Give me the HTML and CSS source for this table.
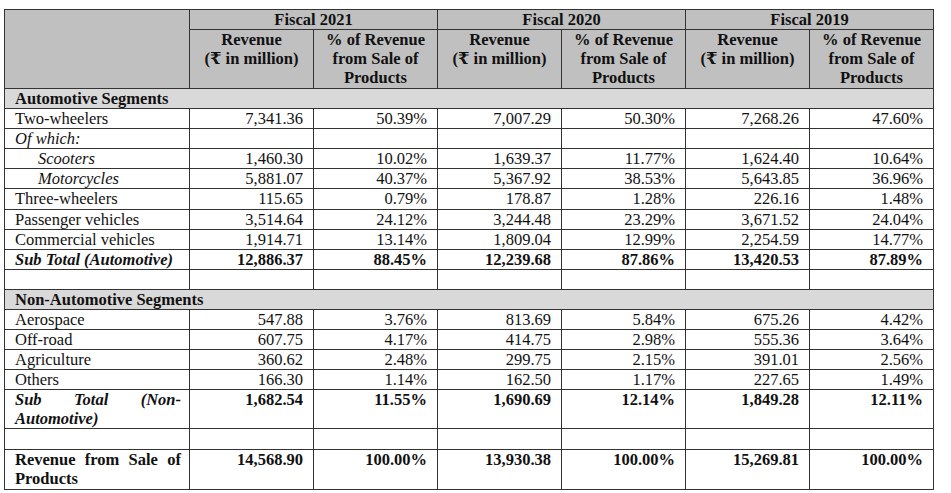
FILE: index.html
```html
<!DOCTYPE html>
<html lang="en">
<head>
<meta charset="utf-8">
<title>Revenue from Sale of Products</title>
<link rel="stylesheet" href="styles.css">
</head>
<body>
<div class="wrap">
<table class="rev">
  <colgroup>
    <col class="c-label">
    <col class="c-num"><col class="c-num">
    <col class="c-num"><col class="c-num">
    <col class="c-num"><col class="c-num">
  </colgroup>
  <thead>
    <tr class="h1">
      <th rowspan="2" class="blank"></th>
      <th colspan="2">Fiscal 2021</th>
      <th colspan="2">Fiscal 2020</th>
      <th colspan="2">Fiscal 2019</th>
    </tr>
    <tr class="h2">
      <th>Revenue<br>(₹ in million)</th>
      <th>% of Revenue<br>from Sale of<br>Products</th>
      <th>Revenue<br>(₹ in million)</th>
      <th>% of Revenue<br>from Sale of<br>Products</th>
      <th>Revenue<br>(₹ in million)</th>
      <th>% of Revenue<br>from Sale of<br>Products</th>
    </tr>
  </thead>
  <tbody>
    <tr class="section"><td colspan="7">Automotive Segments</td></tr>
    <tr><td class="lbl">Two-wheelers</td><td>7,341.36</td><td>50.39%</td><td>7,007.29</td><td>50.30%</td><td>7,268.26</td><td>47.60%</td></tr>
    <tr><td class="lbl it">Of which:</td><td></td><td></td><td></td><td></td><td></td><td></td></tr>
    <tr><td class="lbl it sub">Scooters</td><td>1,460.30</td><td>10.02%</td><td>1,639.37</td><td>11.77%</td><td>1,624.40</td><td>10.64%</td></tr>
    <tr><td class="lbl it sub">Motorcycles</td><td>5,881.07</td><td>40.37%</td><td>5,367.92</td><td>38.53%</td><td>5,643.85</td><td>36.96%</td></tr>
    <tr><td class="lbl">Three-wheelers</td><td>115.65</td><td>0.79%</td><td>178.87</td><td>1.28%</td><td>226.16</td><td>1.48%</td></tr>
    <tr><td class="lbl">Passenger vehicles</td><td>3,514.64</td><td>24.12%</td><td>3,244.48</td><td>23.29%</td><td>3,671.52</td><td>24.04%</td></tr>
    <tr><td class="lbl">Commercial vehicles</td><td>1,914.71</td><td>13.14%</td><td>1,809.04</td><td>12.99%</td><td>2,254.59</td><td>14.77%</td></tr>
    <tr class="total"><td class="lbl bi">Sub Total (Automotive)</td><td>12,886.37</td><td>88.45%</td><td>12,239.68</td><td>87.86%</td><td>13,420.53</td><td>87.89%</td></tr>
    <tr class="empty"><td></td><td></td><td></td><td></td><td></td><td></td><td></td></tr>
    <tr class="section"><td colspan="7">Non-Automotive Segments</td></tr>
    <tr><td class="lbl">Aerospace</td><td>547.88</td><td>3.76%</td><td>813.69</td><td>5.84%</td><td>675.26</td><td>4.42%</td></tr>
    <tr><td class="lbl">Off-road</td><td>607.75</td><td>4.17%</td><td>414.75</td><td>2.98%</td><td>555.36</td><td>3.64%</td></tr>
    <tr><td class="lbl">Agriculture</td><td>360.62</td><td>2.48%</td><td>299.75</td><td>2.15%</td><td>391.01</td><td>2.56%</td></tr>
    <tr><td class="lbl">Others</td><td>166.30</td><td>1.14%</td><td>162.50</td><td>1.17%</td><td>227.65</td><td>1.49%</td></tr>
    <tr class="total tall"><td class="lbl bi just">Sub Total (Non-Automotive)</td><td>1,682.54</td><td>11.55%</td><td>1,690.69</td><td>12.14%</td><td>1,849.28</td><td>12.11%</td></tr>
    <tr class="empty"><td></td><td></td><td></td><td></td><td></td><td></td><td></td></tr>
    <tr class="total tall last"><td class="lbl b just">Revenue from Sale of Products</td><td>14,568.90</td><td>100.00%</td><td>13,930.38</td><td>100.00%</td><td>15,269.81</td><td>100.00%</td></tr>
  </tbody>
</table>
</div>
</body>
</html>
```

FILE: styles.css
```css
html, body {
  margin: 0;
  padding: 0;
  background: #ffffff;
}

.wrap {
  padding: 9px 0 0 4px;
}

.rev {
  border-collapse: collapse;
  table-layout: fixed;
  width: 929px;
  font-family: "Liberation Serif", "DejaVu Serif", serif;
  font-size: 16.5px;
  line-height: 19px;
  color: #111;
}

.c-label { width: 185px; }
.c-num { width: 124px; }

.rev th,
.rev td {
  border: 1px solid #333;
  padding: 0 10px;
  vertical-align: top;
}

.rev thead th {
  background: #c0c0c0;
  font-weight: bold;
  text-align: center;
  padding: 0 4px;
}

.rev .h1 th {
  height: 19px;
}

.rev .h2 th {
  height: 58px;
}

.rev tbody td {
  text-align: right;
  height: 19.1px;
}

.rev tbody td.lbl {
  text-align: left;
  padding-left: 10px;
  padding-right: 8px;
}

.rev .section td {
  background: #d9d9d9;
  text-align: left;
  font-weight: bold;
  padding-left: 10px;
}

.it { font-style: italic; }
.sub { padding-left: 33px !important; }

.total td { font-weight: bold; }
.bi { font-style: italic; }

.just {
  text-align: justify !important;
  text-align-last: left;
}

.rev .tall td { height: 38px; }
.rev .last td { height: 39px; }
```
